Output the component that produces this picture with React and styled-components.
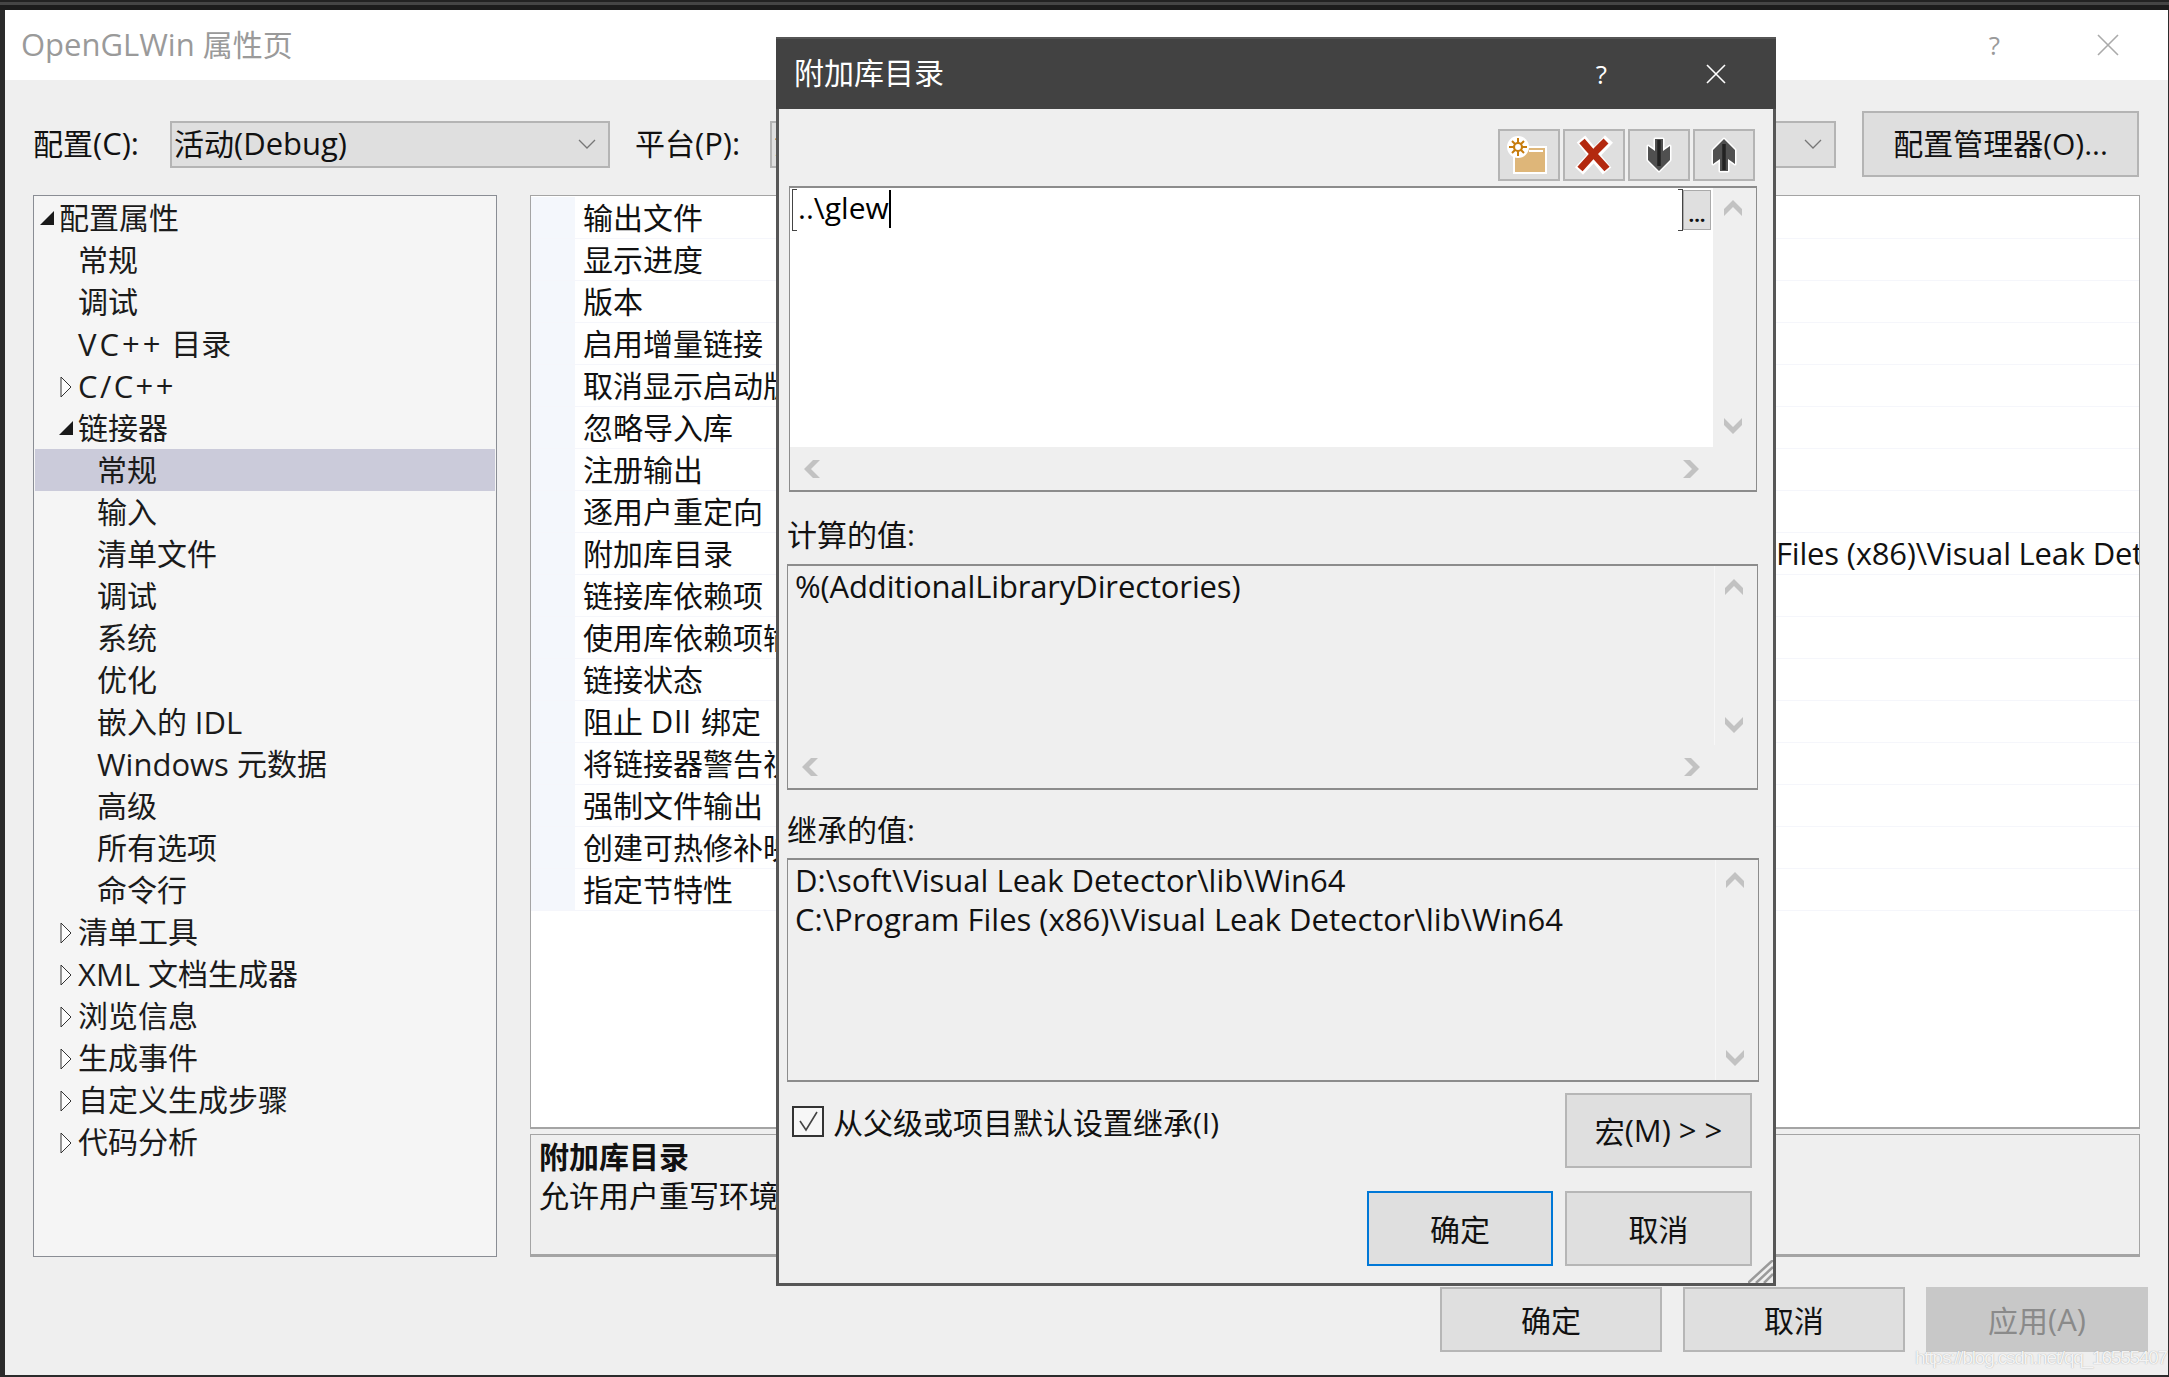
import React from 'react';
import styled, { createGlobalStyle } from 'styled-components';

const Global = createGlobalStyle`
  html, body { margin: 0; padding: 0; background: #2b2b2b; }
  body { width: 2169px; height: 1377px; overflow: hidden; font-family: "Open Sans", "Noto Sans CJK SC", sans-serif; font-size: 30px; color: #111; }
`;

const L = styled.span`font-size: 31px; letter-spacing: ${p => p.$ls || 0}px;`;
const Desktop = styled.div`
  position: relative; width: 2169px; height: 1377px; box-sizing: border-box;
  padding: 10px 1px 2px 5px; display: flex;
  background: linear-gradient(#222 0, #222 2px, #454545 2px, #454545 5px, #1c1c1c 5px, #1c1c1c 10px, #2b2b2b 10px);
`;
const Win = styled.div`flex: 1; display: flex; flex-direction: column; background: #efefef; min-width: 0;`;
const TitleBar = styled.div`
  height: 70px; flex: none; background: #fff; display: flex; align-items: center; color: #9a9a9a;
  padding: 0 49px 0 16px;
`;
const TitleText = styled.div`flex: 1; font-size: 30px; line-height: 40px; white-space: nowrap; padding-bottom: 2px;`;
const Help = styled.span`font-size: 26px; line-height: 1; color: inherit; margin-right: ${p => p.$mr}px;`;
const Body = styled.div`flex: 1; display: flex; flex-direction: column; padding: 31px 20px 0 28px; min-height: 0;`;
const ConfigRow = styled.div`display: flex; align-items: center; height: 66px; flex: none;`;
const FieldLabel = styled.div`line-height: 40px; white-space: nowrap; width: ${p => p.$w}px; margin-left: ${p => p.$ml || 0}px; flex: none; padding-bottom: 2px;`;
const Combo = styled.div`
  box-sizing: border-box; width: ${p => p.$w}px; height: 47px; flex: none; border: 2px solid #b4b4b4; background: #dfdfdf;
  display: flex; align-items: center; padding: 0 12px 0 2px; white-space: nowrap; overflow: hidden; line-height: 40px;
`;
const ComboText = styled.div`flex: 1; overflow: hidden; padding-bottom: 2px;`;
const ManageButton = styled.div`
  box-sizing: border-box; width: 277px; height: 66px; margin-left: 26px; flex: none; border: 2px solid #b4b4b4; background: #dedede;
  display: flex; align-items: center; justify-content: center; white-space: nowrap; padding-bottom: 4px;
`;
const Panels = styled.div`display: flex; margin-top: 18px; height: 1062px; flex: none; gap: 33px;`;
const Tree = styled.div`
  box-sizing: border-box; width: 464px; flex: none; border: 1px solid #8a8d94; background: #f5f5f5; padding: 1px;
`;
const TreeRow = styled.div`
  height: 42px; display: flex; align-items: center; position: relative; line-height: 42px; white-space: pre; color: #1b1b1b;
  padding-left: ${p => [24, 43, 62][p.$level]}px;
  background: ${p => (p.$sel ? '#cbcbda' : 'transparent')};
`;
const Twist = styled.svg`position: absolute; left: ${p => p.$left}px; top: ${p => p.$top}px;`;
const RightCol = styled.div`flex: 1; display: flex; flex-direction: column; gap: 5px; min-width: 0; margin-right: 8px;`;
const Props = styled.div`
  box-sizing: border-box; height: 934px; flex: none; border: 1px solid #a4a4a4; border-bottom-width: 2px; background: #fff; padding-top: 1px; overflow: hidden;
`;
const PropRow = styled.div`
  display: flex; height: 42px; box-sizing: border-box; border-bottom: 1px solid #f5f6fb; line-height: 41px; white-space: pre;
`;
const Gutter = styled.div`width: 44px; flex: none; background: #f4f7fc;`;
const PropName = styled.div`width: 1201px; flex: none; padding-left: 8px; box-sizing: border-box; overflow: hidden;`;
const PropValue = styled.div`flex: 1; overflow: hidden;`;
const Desc = styled.div`
  flex: 1; box-sizing: border-box; border: 1px solid #a4a4a4; border-bottom-width: 3px; background: #efefef; padding: 2px 8px; line-height: 39px; white-space: nowrap;
`;
const DescTitle = styled.div`font-weight: 700;`;
const Footer = styled.div`display: flex; justify-content: flex-end; gap: 21px; margin-top: 30px;`;
const Btn = styled.div`
  box-sizing: border-box; width: ${p => p.$w}px; height: ${p => p.$h}px; flex: none; display: flex; align-items: center; justify-content: center; padding-bottom: 2px;
  background: ${p => (p.$off ? '#c8c8c8' : '#dfdfdf')}; color: ${p => (p.$off ? '#8a8a8a' : '#111')};
  border: ${p => (p.$def ? '2px solid #0078d7' : p.$off ? '2px solid #c8c8c8' : '2px solid #b6b6b6')}; white-space: pre;
`;
const Watermark = styled.div`
  position: absolute; left: 1915px; top: 1344px; font-family: "Liberation Sans", sans-serif; font-size: 19px; letter-spacing: -1.2px; line-height: 28px; color: rgba(255,255,255,.9);
  text-shadow: 0 0 1px rgba(120,120,120,.7); white-space: nowrap; z-index: 5;
`;

const Dialog = styled.div`
  position: absolute; left: 776px; top: 37px; width: 1000px; height: 1249px; box-sizing: border-box;
  border: 3px solid #565656; border-top: 0; background: #efefef; display: flex; flex-direction: column; z-index: 3;
`;
const DialogTitle = styled.div`
  height: 72px; flex: none; margin: 0 -3px; background: #424242; color: #fff; display: flex; align-items: center; padding: 0 50px 0 18px;
  border-top: 2px solid #555; box-sizing: border-box;
`;
const DialogContent = styled.div`flex: 1; display: flex; flex-direction: column; padding: 0 15px 0 8px; position: relative;`;
const Toolbar = styled.div`display: flex; justify-content: flex-end; gap: 3px; margin: 20px 3px 5px 0;`;
const ToolBtn = styled.div`
  box-sizing: border-box; width: 62px; height: 52px; background: #dfdfdf; border: 2px solid #b4b4b4; display: flex; align-items: center; justify-content: center;
`;
const ScrollBox = styled.div`
  box-sizing: border-box; display: grid; grid-template-columns: minmax(0, 1fr) 43px; grid-template-rows: minmax(0, 1fr) 43px;
  height: ${p => p.$h}px; margin: 0 ${p => p.$mr || 0}px 0 ${p => p.$ml || 0}px; border: 2px solid #8c8c8c; border-width: 2px 1px 2px 1px; background: #efefef;
`;
const ScrollBoxFull = styled(ScrollBox)`grid-template-rows: minmax(0, 1fr);`;
const EditArea = styled.div`background: #fff; position: relative; padding: 1px 0 0 2px;`;
const EditRow = styled.div`display: flex; height: 42px; align-items: stretch;`;
const EditText = styled.div`flex: 1; padding-left: 1px; line-height: 38px; font-size: 30px; color: #000;`;
const Caret = styled.span`display: inline-block; width: 2px; height: 38px; background: #000; vertical-align: -9px;`;
const Bracket = styled.div`width: 4px; flex: none; border: solid #444; border-width: 1px 0 1px 1px; transform: scaleX(${p => p.$flip ? -1 : 1});`;
const Browse = styled.div`
  box-sizing: border-box; width: 28px; height: 40px; margin: 1px 2px 0 0; flex: none; background: #dfdfdf; border: 1px solid #aaa; font-size: 20px; font-weight: 700;
  display: flex; justify-content: center; align-items: flex-end; line-height: 20px; padding-bottom: 4px;
`;
const VScroll = styled.div`display: flex; flex-direction: column; justify-content: space-between; align-items: center; padding: ${p => p.$pad};`;
const VScrollLined = styled(VScroll)`border-left: 1px solid #f7f7f7;`;
const HScroll = styled.div`display: flex; justify-content: space-between; align-items: center; padding: 0 ${p => p.$r}px 0 13px;`;
const Corner = styled.div``;
const Readonly = styled.div`padding: 1px 0 0 7px; line-height: 39px; white-space: nowrap; font-size: 31px; letter-spacing: ${p => p.$ls || 0}px;`;
const BoxLabel = styled.div`line-height: 30px; margin: ${p => p.$mt}px 0 ${p => p.$mb}px 0; white-space: nowrap;`;
const CheckRow = styled.div`display: flex; justify-content: space-between; margin-top: 11px; padding-left: 5px; padding-right: 6px;`;
const CheckWrap = styled.div`display: flex; align-items: center; height: 30px; margin-top: 13px; gap: 9px; white-space: nowrap;`;
const CheckBox = styled.div`box-sizing: border-box; width: 32px; height: 31px; border: 2px solid #333; background: #f7f7f7; display: flex; align-items: center; justify-content: center;`;
const ActionRow = styled.div`display: flex; justify-content: flex-end; gap: 12px; margin-top: 23px; padding-right: 6px;`;
const Grip = styled.svg`position: absolute; right: 0; bottom: 0;`;

const Chevron = ({ dir }) => {
  const r = { up: 0, down: 180, left: 270, right: 90 }[dir];
  return (
    <svg width="18" height="18" viewBox="0 0 18 18" style={{ transform: `rotate(${r}deg)`, display: 'block' }}>
      <polygon points="9,1 18,10 18,17 9,8 0,17 0,10" fill="#c2c2c2" />
    </svg>
  );
};
const ComboArrow = () => (
  <svg width="18" height="10" viewBox="0 0 18 10"><path d="M1 1 L9 9 L17 1" fill="none" stroke="#777" strokeWidth="1.3" /></svg>
);
const TwistOpen = ({ left }) => (
  <Twist $left={left} $top={11} width="14" height="20" viewBox="0 0 14 20"><polygon points="14,3 14,17 0,17" fill="#1a1a1a" /></Twist>
);
const TwistClosed = () => (
  <Twist $left={25} $top={11} width="12" height="22" viewBox="0 0 12 22"><polygon points="1,1 11,11 1,21" fill="#fdfdfd" stroke="#333" strokeWidth="1" /></Twist>
);

const FolderIcon = () => (
  <svg width="44" height="40" viewBox="0 0 44 40">
    <path d="M6 11 h34 v28 h-34z" fill="#fff" />
    <path d="M8 13 h30 v24 h-30z" fill="#deb679" />
    <path d="M22 16 h14" stroke="#fff" strokeWidth="2" />
    <circle cx="11" cy="12" r="11" fill="#fff" />
    <circle cx="11" cy="12" r="4" fill="none" stroke="#c77d0e" strokeWidth="2.2" />
    <path d="M11 3 v5 M11 16 v5 M2 12 h5 M15 12 h5 M5 6 l3 3 M14 15 l3 3 M17 6 l-3 3 M5 18 l3 -3" stroke="#c77d0e" strokeWidth="2" />
  </svg>
);
const DeleteIcon = () => (
  <svg width="42" height="40" viewBox="0 0 42 40">
    <g fill="none" strokeLinecap="butt">
      <path d="M8 4 L34 36 M36 4 L6 36" stroke="#fff" strokeWidth="11" />
      <path d="M9 6 L15 13 L24 23 L34 34" stroke="#b3290f" strokeWidth="7" />
      <path d="M33 6 L24 15 L16 24 L7 34" stroke="#b3290f" strokeWidth="7" />
    </g>
  </svg>
);
const ArrowIcon = ({ up }) => (
  <svg width="26" height="36" viewBox="0 0 26 36" style={{ transform: up ? 'rotate(180deg)' : 'none' }}>
    <path d="M9 2 h8 v12 l7 -5 v14 l-11 11 l-11 -11 v-14 l7 5 z" fill="#505050" stroke="#fff" strokeWidth="3" strokeLinejoin="round" paintOrder="stroke" />
    <path d="M13 3 v26" stroke="#222" strokeWidth="3.5" />
  </svg>
);

const treeRows = [
  ['配置属性', 0, 'open0'], ['常规', 1], ['调试', 1], [<><L $ls={3}>VC++</L> 目录</>, 1], [<L $ls={2.4}>C/C++</L>, 1, 'closed'], ['链接器', 1, 'open1'],
  ['常规', 2, null, true], ['输入', 2], ['清单文件', 2], ['调试', 2], ['系统', 2], ['优化', 2], [<>嵌入的 <L>IDL</L></>, 2], [<><L>Windows </L>元数据</>, 2], ['高级', 2], ['所有选项', 2], ['命令行', 2],
  ['清单工具', 1, 'closed'], [<><L>XML </L>文档生成器</>, 1, 'closed'], ['浏览信息', 1, 'closed'], ['生成事件', 1, 'closed'], ['自定义生成步骤', 1, 'closed'], ['代码分析', 1, 'closed'],
];
const propRows = ['输出文件', '显示进度', '版本', '启用增量链接', '取消显示启动版权标志', '忽略导入库', '注册输出', '逐用户重定向', '附加库目录', '链接库依赖项', '使用库依赖项输入', '链接状态', <>阻止 <L $ls={1}>Dll </L>绑定</>, '将链接器警告视为错误', '强制文件输出', '创建可热修补映像', '指定节特性'];

export default function App() {
  return (
    <Desktop>
      <Global />
      <Win>
        <TitleBar>
          <TitleText><L>OpenGLWin </L>属性页</TitleText>
          <Help $mr={97}>?</Help>
          <svg width="22" height="22" viewBox="0 0 22 22"><path d="M1 1 L21 21 M21 1 L1 21" stroke="#aaa" strokeWidth="1.6" /></svg>
        </TitleBar>
        <Body>
          <ConfigRow>
            <FieldLabel $w={137}>配置<L>(C):</L></FieldLabel>
            <Combo $w={440}><ComboText>活动<L>(Debug)</L></ComboText><ComboArrow /></Combo>
            <FieldLabel $w={135} $ml={25}>平台<L>(P):</L></FieldLabel>
            <Combo $w={1066}><ComboText>活动(x64)</ComboText><ComboArrow /></Combo>
            <ManageButton>配置管理器(O)...</ManageButton>
          </ConfigRow>
          <Panels>
            <Tree>
              {treeRows.map(([t, level, tw, sel], i) => (
                <TreeRow key={i} $level={level} $sel={sel}>
                  {tw === 'open0' && <TwistOpen left={5} />}
                  {tw === 'open1' && <TwistOpen left={24} />}
                  {tw === 'closed' && <TwistClosed />}
                  {t}
                </TreeRow>
              ))}
            </Tree>
            <RightCol>
              <Props>
                {propRows.map((t, i) => (
                  <PropRow key={i}>
                    <Gutter />
                    <PropName>{t}</PropName>
                    <PropValue>{i === 8 ? <L $ls={-0.2}>Files (x86)\Visual Leak Detector\lib\Win64</L> : ''}</PropValue>
                  </PropRow>
                ))}
              </Props>
              <Desc>
                <DescTitle>附加库目录</DescTitle>
                <div>允许用户重写环境库路径</div>
              </Desc>
            </RightCol>
          </Panels>
          <Footer>
            <Btn $w={222} $h={65}>确定</Btn>
            <Btn $w={222} $h={65}>取消</Btn>
            <Btn $w={222} $h={65} $off>应用<L>(A)</L></Btn>
          </Footer>
        </Body>
      </Win>

      <Dialog>
        <DialogTitle>
          <TitleText>附加库目录</TitleText>
          <Help $mr={99}>?</Help>
          <svg width="20" height="20" viewBox="0 0 20 20"><path d="M1 1 L19 19 M19 1 L1 19" stroke="#fff" strokeWidth="1.6" /></svg>
        </DialogTitle>
        <DialogContent>
          <Toolbar>
            <ToolBtn><FolderIcon /></ToolBtn>
            <ToolBtn><DeleteIcon /></ToolBtn>
            <ToolBtn><ArrowIcon /></ToolBtn>
            <ToolBtn><ArrowIcon up /></ToolBtn>
          </Toolbar>
          <ScrollBox $h={306} $ml={2} $mr={1}>
            <EditArea>
              <EditRow>
                <Bracket />
                <EditText>..\glew<Caret /></EditText>
                <Bracket $flip />
                <Browse>...</Browse>
              </EditRow>
            </EditArea>
            <VScroll $pad="11px 4px 12px 0"><Chevron dir="up" /><Chevron dir="down" /></VScroll>
            <HScroll $r={13}><Chevron dir="left" /><Chevron dir="right" /></HScroll>
            <Corner />
          </ScrollBox>
          <BoxLabel $mt={28} $mb={14}>计算的值:</BoxLabel>
          <ScrollBox $h={226}>
            <Readonly $ls={-0.13}>%(AdditionalLibraryDirectories)</Readonly>
            <VScrollLined $pad="12px 4px 11px 0"><Chevron dir="up" /><Chevron dir="down" /></VScrollLined>
            <HScroll $r={13}><Chevron dir="left" /><Chevron dir="right" /></HScroll>
            <Corner />
          </ScrollBox>
          <BoxLabel $mt={25} $mb={13}>继承的值:</BoxLabel>
          <ScrollBoxFull $h={224} $mr={-1}>
            <Readonly>D:\soft\Visual Leak Detector\lib\Win64<br />C:\Program Files (x86)\Visual Leak Detector\lib\Win64</Readonly>
            <VScrollLined $pad="11px 4px 13px 0"><Chevron dir="up" /><Chevron dir="down" /></VScrollLined>
          </ScrollBoxFull>
          <CheckRow>
            <CheckWrap>
              <CheckBox>
                <svg width="22" height="22" viewBox="0 0 22 22"><path d="M3 11 L9 20 L20 2" fill="none" stroke="#444" strokeWidth="1.6" /></svg>
              </CheckBox>
              从父级或项目默认设置继承(I)
            </CheckWrap>
            <Btn $w={187} $h={75}>宏<L>(M) &gt; &gt;</L></Btn>
          </CheckRow>
          <ActionRow>
            <Btn $w={186} $h={75} $def>确定</Btn>
            <Btn $w={187} $h={75}>取消</Btn>
          </ActionRow>
          <Grip width="25" height="23" viewBox="0 0 25 23">
            <path d="M0 23 L25 0 M8 23 L25 7 M16 23 L25 14" stroke="#9a9a9a" strokeWidth="2.5" />
          </Grip>
        </DialogContent>
      </Dialog>
      <Watermark>https://blog.csdn.net/qq_16555407</Watermark>
    </Desktop>
  );
}
